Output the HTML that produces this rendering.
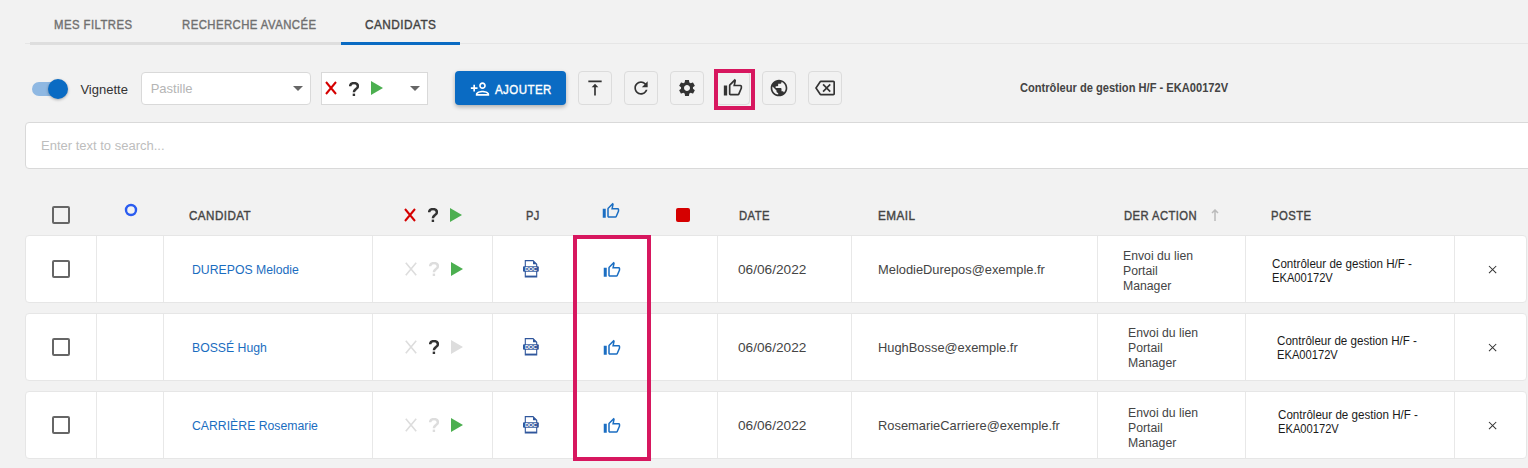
<!DOCTYPE html>
<html><head><meta charset="utf-8"><style>
html,body{margin:0;padding:0}
body{width:1528px;height:468px;background:#f2f2f2;position:relative;overflow:hidden;font-family:"Liberation Sans", sans-serif}
.a{position:absolute}
.t{position:absolute;white-space:nowrap;line-height:1;transform-origin:0 0}
</style></head><body>
<div class="a" style="left:25px;top:43px;width:1503px;height:1px;background:#e6e6e6"></div>
<div class="a" style="left:30px;top:42px;width:311px;height:3px;background:#dedede"></div>
<div class="a" style="left:341px;top:42px;width:119px;height:3px;background:#0a6bc3"></div>
<div class="t" style="left:54.00px;top:18.00px;font-size:13px;font-weight:normal;color:#707070;transform:scaleX(0.8734602463605823);-webkit-text-stroke:0.4px #707070;letter-spacing:0.5px;">MES FILTRES</div>
<div class="t" style="left:181.60px;top:18.00px;font-size:13px;font-weight:normal;color:#707070;transform:scaleX(0.8735332464146024);-webkit-text-stroke:0.4px #707070;letter-spacing:0.5px;">RECHERCHE AVANCÉE</div>
<div class="t" style="left:364.80px;top:18.00px;font-size:13px;font-weight:normal;color:#424242;transform:scaleX(0.9079283887468029);-webkit-text-stroke:0.4px #424242;letter-spacing:0.5px;">CANDIDATS</div>
<div class="a" style="left:32px;top:82px;width:34px;height:14px;background:#8fb8e2;border-radius:7px"></div>
<div class="a" style="left:48px;top:79px;width:20px;height:20px;background:#0a6bc3;border-radius:50%;box-shadow:0 1px 3px rgba(0,0,0,.3)"></div>
<div class="t" style="left:80.40px;top:83.00px;font-size:13px;font-weight:normal;color:#333;">Vignette</div>
<div class="a" style="left:141px;top:72px;width:168px;height:31px;background:#fff;border:1px solid #d9d9d9;border-radius:4px"></div>
<div class="t" style="left:150.70px;top:82.00px;font-size:13px;font-weight:normal;color:#b5b5b5;">Pastille</div>
<svg class="a" style="left:293px;top:86px;" width="10" height="5" viewBox="0 0 10 5"><path d="M0 0H10L5 5z" fill="#666"/></svg>
<div class="a" style="left:321px;top:72px;width:105px;height:31px;background:#fff;border:1px solid #d9d9d9"></div>
<svg class="a" style="left:325px;top:81px;" width="12" height="14" viewBox="0 0 12 14"><path d="M1 1L11 13M11 1L1 13" stroke="#d50000" stroke-width="2" fill="none"/></svg>
<svg class="a" style="left:349px;top:81.5px;" width="10" height="14" viewBox="0 0 10 14"><path d="M1.1 4.3C1.1 2.3 2.8 1.1 5 1.1C7.3 1.1 8.9 2.4 8.9 4.2C8.9 5.6 8 6.3 6.9 7.1C5.6 8 4.9 8.6 4.9 10.2" stroke="#333" stroke-width="2.5" fill="none"/><rect x="3.7" y="11.6" width="2.4" height="2.4" fill="#333"/></svg>
<svg class="a" style="left:371px;top:81px;" width="12" height="14" viewBox="0 0 12 14"><path d="M0 0L12 7L0 14z" fill="#4caf50"/></svg>
<svg class="a" style="left:410px;top:86px;" width="10" height="5" viewBox="0 0 10 5"><path d="M0 0H10L5 5z" fill="#666"/></svg>
<div class="a" style="left:455px;top:71px;width:111px;height:34px;background:#0a6bc3;border-radius:4px;box-shadow:0 2px 4px rgba(0,0,0,.28)"></div>
<svg class="a" style="left:470px;top:79px;" width="20" height="20" viewBox="0 0 24 24"><path fill="#fff" d="M15 12c2.21 0 4-1.79 4-4s-1.79-4-4-4-4 1.79-4 4 1.79 4 4 4zm0-6c1.1 0 2 .9 2 2s-.9 2-2 2-2-.9-2-2 .9-2 2-2zm0 8c-2.67 0-8 1.34-8 4v2h16v-2c0-2.66-5.33-4-8-4zm-6 4c.22-.72 3.31-2 6-2 2.7 0 5.8 1.29 6 2H9zm-3-3v-3h3v-2H6V7H4v3H1v2h3v3z"/></svg>
<div class="t" style="left:494.80px;top:83.00px;font-size:13px;font-weight:normal;color:#fff;transform:scaleX(0.8854003139717423);-webkit-text-stroke:0.4px #fff;letter-spacing:0.5px;">AJOUTER</div>
<div class="a" style="left:578px;top:71px;width:32px;height:32px;border:1px solid #dcdcdc;border-radius:4px"></div>
<svg class="a" style="left:585px;top:78px;" width="20" height="20" viewBox="0 0 24 24"><g fill="#333"><path d="M8 11h3v10h2V11h3l-4-4-4 4zM4 3v2h16V3H4z"/></g></svg>
<div class="a" style="left:624px;top:71px;width:32px;height:32px;border:1px solid #dcdcdc;border-radius:4px"></div>
<svg class="a" style="left:631px;top:78px;" width="20" height="20" viewBox="0 0 24 24"><g fill="#333"><path d="M17.65 6.35C16.2 4.9 14.21 4 12 4c-4.42 0-7.99 3.58-7.99 8s3.57 8 7.99 8c3.73 0 6.84-2.55 7.73-6h-2.08c-.82 2.33-3.04 4-5.65 4-3.31 0-6-2.69-6-6s2.69-6 6-6c1.66 0 3.140.69 4.220 1.78L13 11h7V4l-2.35 2.35z"/></g></svg>
<div class="a" style="left:670px;top:71px;width:32px;height:32px;border:1px solid #dcdcdc;border-radius:4px"></div>
<svg class="a" style="left:677px;top:78px;" width="20" height="20" viewBox="0 0 24 24"><g fill="#333"><path d="M19.14 12.94c.04-.3.06-.61.06-.94 0-.32-.02-.64-.07-.94l2.03-1.58c.18-.14.23-.41.12-.61l-1.92-3.32c-.12-.22-.37-.29-.59-.22l-2.39.96c-.5-.38-1.03-.7-1.62-.94l-.36-2.54c-.04-.24-.24-.41-.48-.41h-3.84c-.24 0-.43.17-.47.41l-.36 2.54c-.59.24-1.130.57-1.62.94l-2.39-.96c-.22-.08-.47 0-.59.22L2.74 8.87c-.12.21-.08.47.12.61l2.03 1.58c-.05.3-.09.63-.09.94s.02.64.07.94l-2.03 1.58c-.18.14-.23.41-.12.61l1.92 3.32c.12.22.37.29.59.22l2.39-.96c.5.38 1.03.7 1.62.94l.36 2.54c.05.24.24.41.48.41h3.84c.24 0 .44-.17.47-.41l.36-2.54c.59-.24 1.13-.56 1.62-.94l2.39.96c.22.08.47 0 .59-.22l1.92-3.32c.12-.22.07-.47-.12-.61l-2.01-1.58zM12 15.6c-1.98 0-3.6-1.62-3.6-3.6s1.62-3.6 3.6-3.6 3.6 1.62 3.6 3.6-1.62 3.6-3.6 3.6z"/></g></svg>
<div class="a" style="left:716px;top:71px;width:32px;height:32px;border:1px solid #dcdcdc;border-radius:4px"></div>
<svg class="a" style="left:723px;top:78px;" width="20" height="20" viewBox="0 0 24 24"><g fill="#333"><path d="M21 8h-6.31l.95-4.57.03-.32c0-.41-.17-.79-.44-1.06L14.17 1 7.590 7.59C7.22 7.95 7 8.45 7 9v10c0 1.1.9 2 2 2h9c.83 0 1.54-.5 1.84-1.22l3.02-7.05c.09-.23.14-.47.14-.73V10c0-1.1-.9-2-2-2zm0 4l-3 7H9V9l4.34-4.34L12.23 10H21v2zM1 9h4v12H1z"/></g></svg>
<div class="a" style="left:762px;top:71px;width:32px;height:32px;border:1px solid #dcdcdc;border-radius:4px"></div>
<svg class="a" style="left:769px;top:78px;" width="20" height="20" viewBox="0 0 24 24"><g fill="#333"><path d="M12 2C6.48 2 2 6.48 2 12s4.48 10 10 10 10-4.48 10-10S17.52 2 12 2zm-1 17.93c-3.95-.49-7-3.85-7-7.930 0-.62.08-1.21.21-1.79L9 15v1c0 1.1.9 2 2 2v1.93zm6.9-2.54c-.26-.81-1-1.39-1.9-1.39h-1v-3c0-.55-.45-1-1-1H8v-2h2c.55 0 1-.45 1-1V7h2c1.1 0 2-.9 2-2v-.41c2.930 1.19 5 4.06 5 7.41 0 2.08-.8 3.97-2.1 5.39z"/></g></svg>
<div class="a" style="left:808px;top:71px;width:32px;height:32px;border:1px solid #dcdcdc;border-radius:4px"></div>
<svg class="a" style="left:815px;top:78px;" width="20" height="20" viewBox="0 0 24 24"><g fill="#333"><path d="M22 3H7c-.69 0-1.23.35-1.59.88L0 12l5.41 8.11c.36.53.9.89 1.59.89h15c1.1 0 2-.9 2-2V5c0-1.1-.9-2-2-2zm0 16H7.07L2.4 12l4.66-7H22v14zm-11.59-2L14 13.41 17.59 17 19 15.59 15.41 12 19 8.41 17.59 7 14 10.59 10.41 7 9 8.41 12.59 12 9 15.59z"/></g></svg>
<div class="a" style="left:714px;top:69px;width:33px;height:33px;border:4px solid #d7175f"></div>
<div class="t" style="left:1020.00px;top:82.14px;font-size:12px;font-weight:bold;color:#444;transform:scaleX(0.926);">Contrôleur de gestion H/F - EKA00172V</div>
<div class="a" style="left:25px;top:122px;width:1520px;height:45px;background:#fff;border:1px solid #d9d9d9;border-radius:4px"></div>
<div class="t" style="left:41.40px;top:140.12px;font-size:12.5px;font-weight:normal;color:#bdbdbd;transform:scaleX(1.04);">Enter text to search...</div>
<div class="a" style="left:52px;top:206px;width:14px;height:14px;border:2px solid #666;border-radius:2px"></div>
<svg class="a" style="left:124px;top:203px;" width="14" height="14" viewBox="0 0 14 14"><circle cx="7" cy="7" r="5" stroke="#2a5cf0" stroke-width="2.4" fill="none"/></svg>
<div class="t" style="left:189.30px;top:209.30px;font-size:13px;font-weight:normal;color:#444;transform:scaleX(0.8942028985507247);-webkit-text-stroke:0.4px #444;letter-spacing:0.5px;">CANDIDAT</div>
<svg class="a" style="left:404px;top:208px;" width="12" height="14" viewBox="0 0 12 14"><path d="M1 1L11 13M11 1L1 13" stroke="#d50000" stroke-width="2" fill="none"/></svg>
<svg class="a" style="left:428.2px;top:208px;" width="10" height="14" viewBox="0 0 10 14"><path d="M1.1 4.3C1.1 2.3 2.8 1.1 5 1.1C7.3 1.1 8.9 2.4 8.9 4.2C8.9 5.6 8 6.3 6.9 7.1C5.6 8 4.9 8.6 4.9 10.2" stroke="#333" stroke-width="2.5" fill="none"/><rect x="3.7" y="11.6" width="2.4" height="2.4" fill="#333"/></svg>
<svg class="a" style="left:450px;top:208px;" width="12" height="14" viewBox="0 0 12 14"><path d="M0 0L12 7L0 14z" fill="#4caf50"/></svg>
<div class="t" style="left:526.00px;top:209.00px;font-size:13px;font-weight:normal;color:#444;transform:scaleX(0.8535031847133758);-webkit-text-stroke:0.4px #444;letter-spacing:0.5px;">PJ</div>
<svg class="a" style="left:602px;top:202px;" width="18" height="18" viewBox="0 0 24 24"><g fill="#1b6ec2"><path d="M21 8h-6.31l.95-4.57.03-.32c0-.41-.17-.79-.44-1.06L14.17 1 7.590 7.59C7.22 7.95 7 8.45 7 9v10c0 1.1.9 2 2 2h9c.83 0 1.54-.5 1.84-1.22l3.02-7.05c.09-.23.14-.47.14-.73V10c0-1.1-.9-2-2-2zm0 4l-3 7H9V9l4.34-4.34L12.23 10H21v2zM1 9h4v12H1z"/></g></svg>
<div class="a" style="left:676px;top:208px;width:14px;height:14px;background:#d50000;border-radius:2px"></div>
<div class="t" style="left:738.50px;top:209.00px;font-size:13px;font-weight:normal;color:#444;transform:scaleX(0.8664772727272726);-webkit-text-stroke:0.4px #444;letter-spacing:0.5px;">DATE</div>
<div class="t" style="left:877.80px;top:209.00px;font-size:13px;font-weight:normal;color:#444;transform:scaleX(0.9024390243902438);-webkit-text-stroke:0.4px #444;letter-spacing:0.5px;">EMAIL</div>
<div class="t" style="left:1123.80px;top:209.00px;font-size:13px;font-weight:normal;color:#444;transform:scaleX(0.8654761904761905);-webkit-text-stroke:0.4px #444;letter-spacing:0.5px;">DER ACTION</div>
<svg class="a" style="left:1211px;top:209px;" width="8" height="12" viewBox="0 0 8 12"><path d="M4 1V12M1 4L4 1L7 4" stroke="#bbb" stroke-width="1.5" fill="none"/></svg>
<div class="t" style="left:1271.40px;top:209.00px;font-size:13px;font-weight:normal;color:#444;transform:scaleX(0.8698481561822127);-webkit-text-stroke:0.4px #444;letter-spacing:0.5px;">POSTE</div>
<div class="a" style="left:25px;top:235px;width:1500px;height:66px;background:#fff;border:1px solid #e6e6e6;border-radius:4px"></div>
<div class="a" style="left:96px;top:236px;width:1px;height:66px;background:#e8e8e8"></div>
<div class="a" style="left:163px;top:236px;width:1px;height:66px;background:#e8e8e8"></div>
<div class="a" style="left:372px;top:236px;width:1px;height:66px;background:#e8e8e8"></div>
<div class="a" style="left:492px;top:236px;width:1px;height:66px;background:#e8e8e8"></div>
<div class="a" style="left:717px;top:236px;width:1px;height:66px;background:#e8e8e8"></div>
<div class="a" style="left:851px;top:236px;width:1px;height:66px;background:#e8e8e8"></div>
<div class="a" style="left:1097px;top:236px;width:1px;height:66px;background:#e8e8e8"></div>
<div class="a" style="left:1245px;top:236px;width:1px;height:66px;background:#e8e8e8"></div>
<div class="a" style="left:1454px;top:236px;width:1px;height:66px;background:#e8e8e8"></div>
<div class="a" style="left:52px;top:260px;width:14px;height:14px;border:2px solid #666;border-radius:2px"></div>
<div class="t" style="left:192.30px;top:264.42px;font-size:12.5px;font-weight:normal;color:#1a6dc0;transform:scaleX(0.98);">DUREPOS Melodie</div>
<svg class="a" style="left:405px;top:262px;" width="12" height="14" viewBox="0 0 12 14"><path d="M0.8 0.8L11.2 13.2M11.2 0.8L0.8 13.2" stroke="#ddd" stroke-width="1.6" fill="none"/></svg>
<svg class="a" style="left:429px;top:262px;" width="10" height="14" viewBox="0 0 10 14"><path d="M1.1 4.3C1.1 2.3 2.8 1.1 5 1.1C7.3 1.1 8.9 2.4 8.9 4.2C8.9 5.6 8 6.3 6.9 7.1C5.6 8 4.9 8.6 4.9 10.2" stroke="#ddd" stroke-width="2.5" fill="none"/><rect x="3.7" y="11.6" width="2.4" height="2.4" fill="#ddd"/></svg>
<svg class="a" style="left:451px;top:262px;" width="12" height="14" viewBox="0 0 12 14"><path d="M0 0L12 7L0 14z" fill="#4caf50"/></svg>
<svg class="a" style="left:522px;top:259px;" width="18" height="19" viewBox="0 0 18 19"><g fill="#2f569c" stroke="none"><path d="M3.3 1.6H11L14.7 5.3V18H3.3Z" fill="none" stroke="#2f569c" stroke-width="1.1"/><path d="M11 1.6V5.3H14.7Z"/><rect x="1" y="7.2" width="15.8" height="5.6" rx="1"/><rect x="3.3" y="16.6" width="11.4" height="1.4"/></g><text x="8.9" y="12.2" font-family="Liberation Sans" font-weight="bold" font-size="5.4" fill="#fff" text-anchor="middle">DOC</text></svg>
<svg class="a" style="left:603px;top:261px;" width="18" height="18" viewBox="0 0 24 24"><g fill="#1b6ec2"><path d="M21 8h-6.31l.95-4.57.03-.32c0-.41-.17-.79-.44-1.06L14.17 1 7.590 7.59C7.22 7.95 7 8.45 7 9v10c0 1.1.9 2 2 2h9c.83 0 1.54-.5 1.84-1.22l3.02-7.05c.09-.23.14-.47.14-.73V10c0-1.1-.9-2-2-2zm0 4l-3 7H9V9l4.34-4.34L12.23 10H21v2zM1 9h4v12H1z"/></g></svg>
<div class="t" style="left:738.00px;top:263.00px;font-size:13px;font-weight:normal;color:#444;transform:scaleX(1.05);">06/06/2022</div>
<div class="t" style="left:878.00px;top:263.00px;font-size:13px;font-weight:normal;color:#444;transform:scaleX(0.99);">MelodieDurepos@exemple.fr</div>
<div class="t" style="left:1123.00px;top:249.74px;font-size:12px;font-weight:normal;color:#444;transform:scaleX(1.02);">Envoi du lien</div>
<div class="t" style="left:1123.00px;top:264.74px;font-size:12px;font-weight:normal;color:#444;transform:scaleX(1.02);">Portail</div>
<div class="t" style="left:1123.00px;top:279.74px;font-size:12px;font-weight:normal;color:#444;transform:scaleX(1.02);">Manager</div>
<div class="t" style="left:1271.80px;top:257.54px;font-size:12px;font-weight:normal;color:#1a1a1a;transform:scaleX(0.967);">Contrôleur de gestion H/F -</div>
<div class="t" style="left:1271.80px;top:271.54px;font-size:12px;font-weight:normal;color:#1a1a1a;transform:scaleX(0.93);">EKA00172V</div>
<svg class="a" style="left:1488px;top:265px;" width="9" height="9" viewBox="0 0 9 9"><path d="M1 1L8.2 8.2M8.2 1L1 8.2" stroke="#333" stroke-width="1.05" fill="none"/></svg>
<div class="a" style="left:25px;top:313px;width:1500px;height:66px;background:#fff;border:1px solid #e6e6e6;border-radius:4px"></div>
<div class="a" style="left:96px;top:314px;width:1px;height:66px;background:#e8e8e8"></div>
<div class="a" style="left:163px;top:314px;width:1px;height:66px;background:#e8e8e8"></div>
<div class="a" style="left:372px;top:314px;width:1px;height:66px;background:#e8e8e8"></div>
<div class="a" style="left:492px;top:314px;width:1px;height:66px;background:#e8e8e8"></div>
<div class="a" style="left:717px;top:314px;width:1px;height:66px;background:#e8e8e8"></div>
<div class="a" style="left:851px;top:314px;width:1px;height:66px;background:#e8e8e8"></div>
<div class="a" style="left:1097px;top:314px;width:1px;height:66px;background:#e8e8e8"></div>
<div class="a" style="left:1245px;top:314px;width:1px;height:66px;background:#e8e8e8"></div>
<div class="a" style="left:1454px;top:314px;width:1px;height:66px;background:#e8e8e8"></div>
<div class="a" style="left:52px;top:338px;width:14px;height:14px;border:2px solid #666;border-radius:2px"></div>
<div class="t" style="left:192.30px;top:342.42px;font-size:12.5px;font-weight:normal;color:#1a6dc0;transform:scaleX(0.98);">BOSSÉ Hugh</div>
<svg class="a" style="left:405px;top:340px;" width="12" height="14" viewBox="0 0 12 14"><path d="M0.8 0.8L11.2 13.2M11.2 0.8L0.8 13.2" stroke="#ddd" stroke-width="1.6" fill="none"/></svg>
<svg class="a" style="left:429px;top:340px;" width="10" height="14" viewBox="0 0 10 14"><path d="M1.1 4.3C1.1 2.3 2.8 1.1 5 1.1C7.3 1.1 8.9 2.4 8.9 4.2C8.9 5.6 8 6.3 6.9 7.1C5.6 8 4.9 8.6 4.9 10.2" stroke="#333" stroke-width="2.5" fill="none"/><rect x="3.7" y="11.6" width="2.4" height="2.4" fill="#333"/></svg>
<svg class="a" style="left:451px;top:340px;" width="12" height="14" viewBox="0 0 12 14"><path d="M0 0L12 7L0 14z" fill="#ddd"/></svg>
<svg class="a" style="left:522px;top:337px;" width="18" height="19" viewBox="0 0 18 19"><g fill="#2f569c" stroke="none"><path d="M3.3 1.6H11L14.7 5.3V18H3.3Z" fill="none" stroke="#2f569c" stroke-width="1.1"/><path d="M11 1.6V5.3H14.7Z"/><rect x="1" y="7.2" width="15.8" height="5.6" rx="1"/><rect x="3.3" y="16.6" width="11.4" height="1.4"/></g><text x="8.9" y="12.2" font-family="Liberation Sans" font-weight="bold" font-size="5.4" fill="#fff" text-anchor="middle">DOC</text></svg>
<svg class="a" style="left:603px;top:339px;" width="18" height="18" viewBox="0 0 24 24"><g fill="#1b6ec2"><path d="M21 8h-6.31l.95-4.57.03-.32c0-.41-.17-.79-.44-1.06L14.17 1 7.590 7.59C7.22 7.95 7 8.45 7 9v10c0 1.1.9 2 2 2h9c.83 0 1.54-.5 1.84-1.22l3.02-7.05c.09-.23.14-.47.14-.73V10c0-1.1-.9-2-2-2zm0 4l-3 7H9V9l4.34-4.34L12.23 10H21v2zM1 9h4v12H1z"/></g></svg>
<div class="t" style="left:738.00px;top:341.00px;font-size:13px;font-weight:normal;color:#444;transform:scaleX(1.05);">06/06/2022</div>
<div class="t" style="left:878.00px;top:341.00px;font-size:13px;font-weight:normal;color:#444;transform:scaleX(0.99);">HughBosse@exemple.fr</div>
<div class="t" style="left:1128.00px;top:326.74px;font-size:12px;font-weight:normal;color:#444;transform:scaleX(1.02);">Envoi du lien</div>
<div class="t" style="left:1128.00px;top:341.74px;font-size:12px;font-weight:normal;color:#444;transform:scaleX(1.02);">Portail</div>
<div class="t" style="left:1128.00px;top:356.74px;font-size:12px;font-weight:normal;color:#444;transform:scaleX(1.02);">Manager</div>
<div class="t" style="left:1276.80px;top:334.64px;font-size:12px;font-weight:normal;color:#1a1a1a;transform:scaleX(0.967);">Contrôleur de gestion H/F -</div>
<div class="t" style="left:1276.80px;top:348.64px;font-size:12px;font-weight:normal;color:#1a1a1a;transform:scaleX(0.93);">EKA00172V</div>
<svg class="a" style="left:1488px;top:343px;" width="9" height="9" viewBox="0 0 9 9"><path d="M1 1L8.2 8.2M8.2 1L1 8.2" stroke="#333" stroke-width="1.05" fill="none"/></svg>
<div class="a" style="left:25px;top:391px;width:1500px;height:66px;background:#fff;border:1px solid #e6e6e6;border-radius:4px"></div>
<div class="a" style="left:96px;top:392px;width:1px;height:66px;background:#e8e8e8"></div>
<div class="a" style="left:163px;top:392px;width:1px;height:66px;background:#e8e8e8"></div>
<div class="a" style="left:372px;top:392px;width:1px;height:66px;background:#e8e8e8"></div>
<div class="a" style="left:492px;top:392px;width:1px;height:66px;background:#e8e8e8"></div>
<div class="a" style="left:717px;top:392px;width:1px;height:66px;background:#e8e8e8"></div>
<div class="a" style="left:851px;top:392px;width:1px;height:66px;background:#e8e8e8"></div>
<div class="a" style="left:1097px;top:392px;width:1px;height:66px;background:#e8e8e8"></div>
<div class="a" style="left:1245px;top:392px;width:1px;height:66px;background:#e8e8e8"></div>
<div class="a" style="left:1454px;top:392px;width:1px;height:66px;background:#e8e8e8"></div>
<div class="a" style="left:52px;top:416px;width:14px;height:14px;border:2px solid #666;border-radius:2px"></div>
<div class="t" style="left:192.30px;top:420.42px;font-size:12.5px;font-weight:normal;color:#1a6dc0;transform:scaleX(0.98);">CARRIÈRE Rosemarie</div>
<svg class="a" style="left:405px;top:418px;" width="12" height="14" viewBox="0 0 12 14"><path d="M0.8 0.8L11.2 13.2M11.2 0.8L0.8 13.2" stroke="#ddd" stroke-width="1.6" fill="none"/></svg>
<svg class="a" style="left:429px;top:418px;" width="10" height="14" viewBox="0 0 10 14"><path d="M1.1 4.3C1.1 2.3 2.8 1.1 5 1.1C7.3 1.1 8.9 2.4 8.9 4.2C8.9 5.6 8 6.3 6.9 7.1C5.6 8 4.9 8.6 4.9 10.2" stroke="#ddd" stroke-width="2.5" fill="none"/><rect x="3.7" y="11.6" width="2.4" height="2.4" fill="#ddd"/></svg>
<svg class="a" style="left:451px;top:418px;" width="12" height="14" viewBox="0 0 12 14"><path d="M0 0L12 7L0 14z" fill="#4caf50"/></svg>
<svg class="a" style="left:522px;top:415px;" width="18" height="19" viewBox="0 0 18 19"><g fill="#2f569c" stroke="none"><path d="M3.3 1.6H11L14.7 5.3V18H3.3Z" fill="none" stroke="#2f569c" stroke-width="1.1"/><path d="M11 1.6V5.3H14.7Z"/><rect x="1" y="7.2" width="15.8" height="5.6" rx="1"/><rect x="3.3" y="16.6" width="11.4" height="1.4"/></g><text x="8.9" y="12.2" font-family="Liberation Sans" font-weight="bold" font-size="5.4" fill="#fff" text-anchor="middle">DOC</text></svg>
<svg class="a" style="left:603px;top:417px;" width="18" height="18" viewBox="0 0 24 24"><g fill="#1b6ec2"><path d="M21 8h-6.31l.95-4.57.03-.32c0-.41-.17-.79-.44-1.06L14.17 1 7.590 7.59C7.22 7.95 7 8.45 7 9v10c0 1.1.9 2 2 2h9c.83 0 1.54-.5 1.84-1.22l3.02-7.05c.09-.23.14-.47.14-.73V10c0-1.1-.9-2-2-2zm0 4l-3 7H9V9l4.34-4.34L12.23 10H21v2zM1 9h4v12H1z"/></g></svg>
<div class="t" style="left:738.00px;top:419.00px;font-size:13px;font-weight:normal;color:#444;transform:scaleX(1.05);">06/06/2022</div>
<div class="t" style="left:878.00px;top:419.00px;font-size:13px;font-weight:normal;color:#444;transform:scaleX(0.99);">RosemarieCarriere@exemple.fr</div>
<div class="t" style="left:1128.00px;top:406.54px;font-size:12px;font-weight:normal;color:#444;transform:scaleX(1.02);">Envoi du lien</div>
<div class="t" style="left:1128.00px;top:421.54px;font-size:12px;font-weight:normal;color:#444;transform:scaleX(1.02);">Portail</div>
<div class="t" style="left:1128.00px;top:436.54px;font-size:12px;font-weight:normal;color:#444;transform:scaleX(1.02);">Manager</div>
<div class="t" style="left:1277.70px;top:408.64px;font-size:12px;font-weight:normal;color:#1a1a1a;transform:scaleX(0.967);">Contrôleur de gestion H/F -</div>
<div class="t" style="left:1277.70px;top:422.64px;font-size:12px;font-weight:normal;color:#1a1a1a;transform:scaleX(0.93);">EKA00172V</div>
<svg class="a" style="left:1488px;top:421px;" width="9" height="9" viewBox="0 0 9 9"><path d="M1 1L8.2 8.2M8.2 1L1 8.2" stroke="#333" stroke-width="1.05" fill="none"/></svg>
<div class="a" style="left:573px;top:235px;width:70px;height:218px;border:4px solid #d7175f"></div>
</body></html>
